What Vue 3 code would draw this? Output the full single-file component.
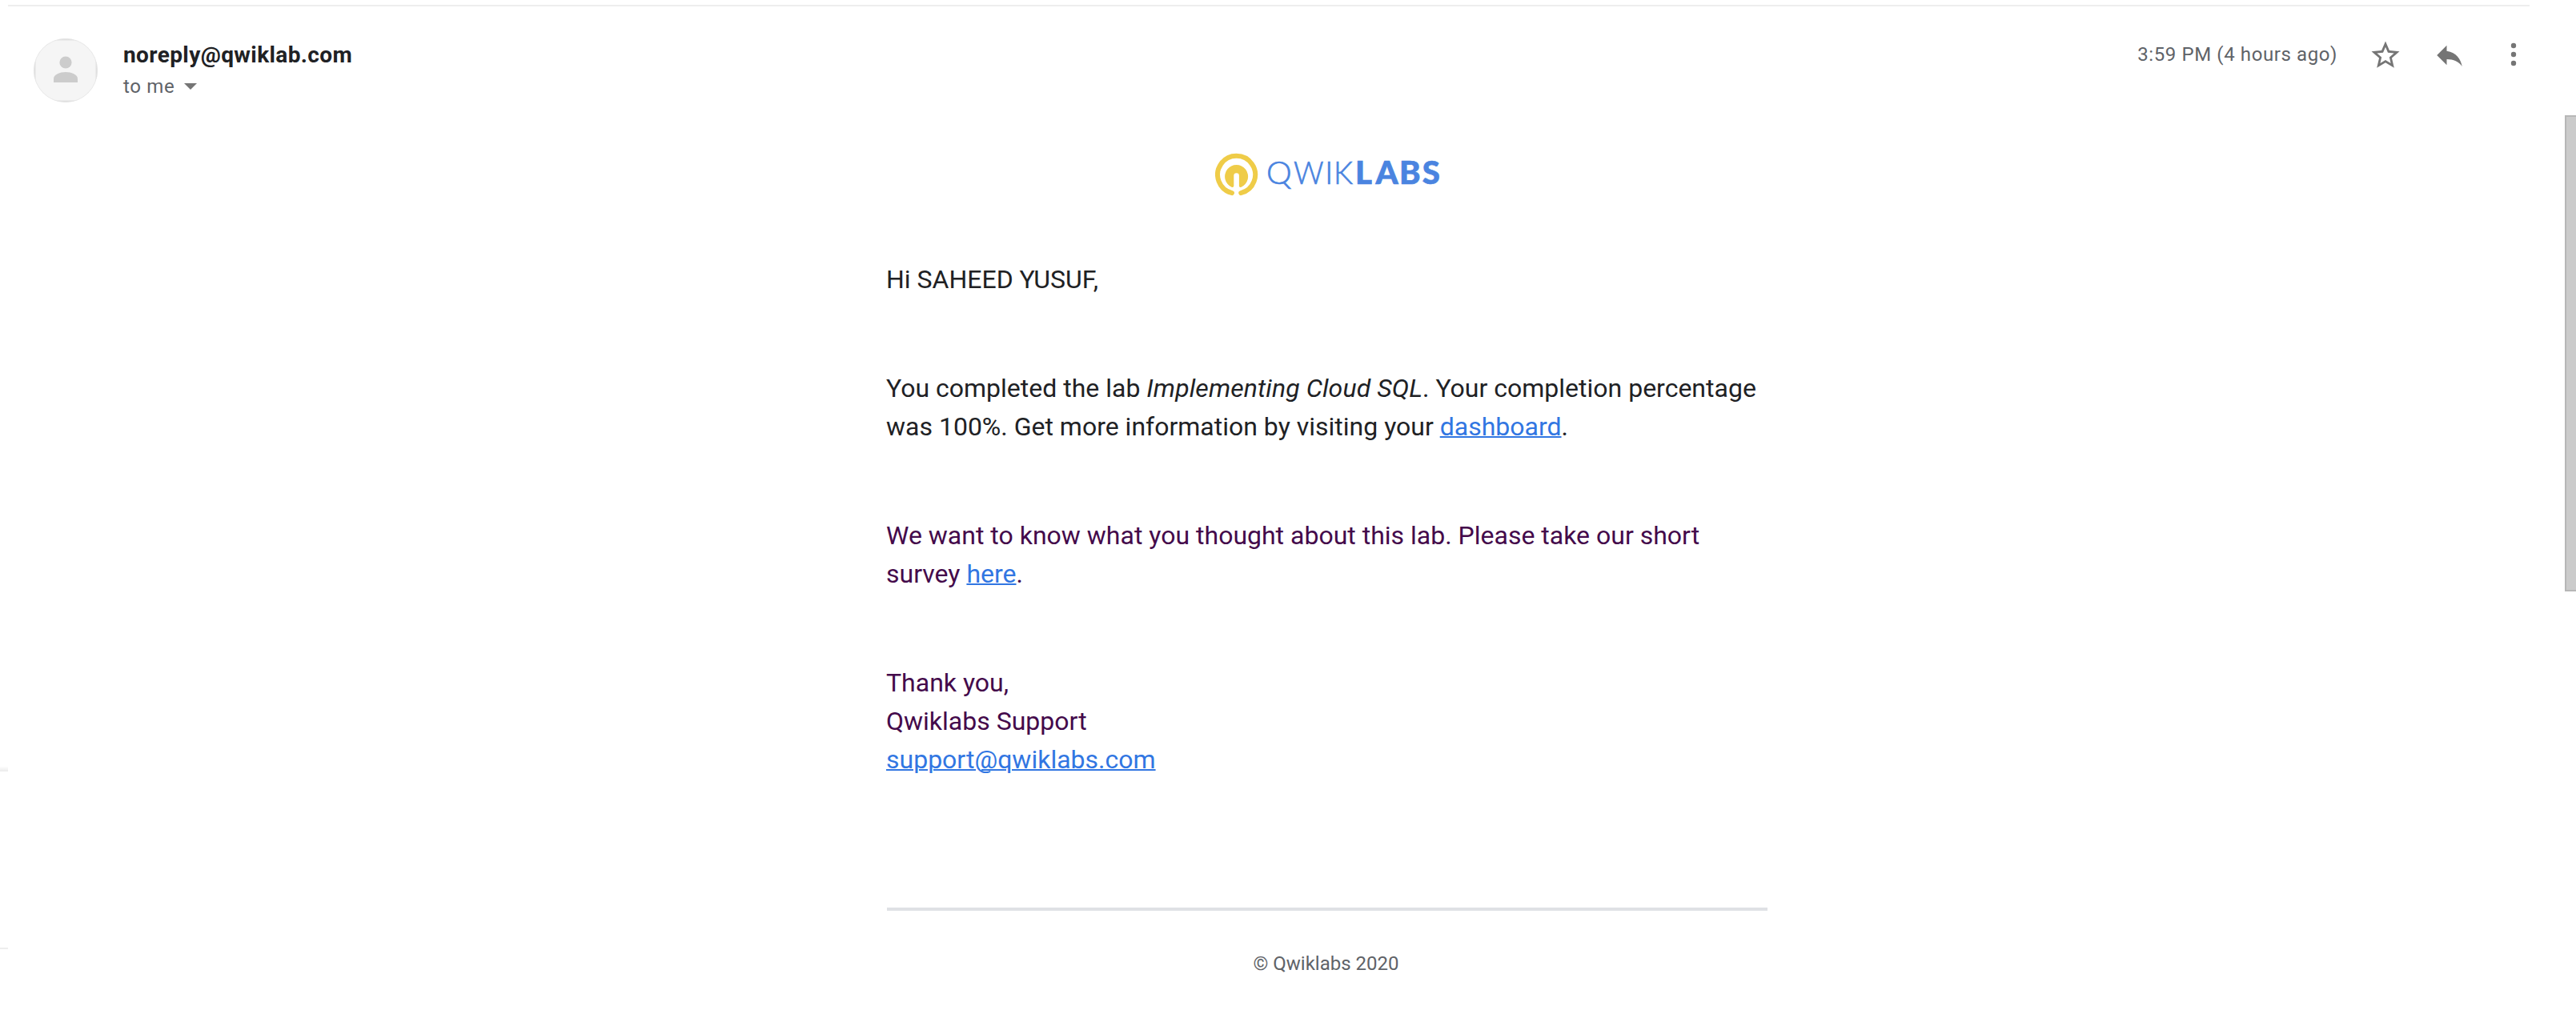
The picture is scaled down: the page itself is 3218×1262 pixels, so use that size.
<script setup>
const sender = 'noreply@qwiklab.com'
const sentAt = '3:59 PM (4 hours ago)'
</script>

<template>
  <div class="window">
    <aside class="gutter">
      <span class="divider shaded"></span>
      <span class="divider"></span>
    </aside>

    <main class="message">
      <header class="header">
        <svg class="avatar" viewBox="0 0 80 80">
          <defs>
            <clipPath id="avatar-clip"><circle cx="40" cy="40" r="40" /></clipPath>
          </defs>
          <g clip-path="url(#avatar-clip)">
            <rect width="80" height="80" fill="#e0e0e0" />
            <rect x="2.5" y="2.5" width="75" height="75" fill="#f5f5f5" />
            <circle cx="40" cy="40" r="39.6" fill="none" stroke="#e6e6e6" stroke-width=".8" />
          </g>
          <circle cx="40" cy="30" r="7.6" fill="#ccc" />
          <path d="M25 55v-4.500c0-5.500 8-8.500 15-8.500s15 3 15 8.500V55z" fill="#ccc" />
        </svg>

        <div class="people">
          <div class="sender">{{ sender }}</div>
          <div class="recipient">
            <span>to me</span>
            <svg class="caret" viewBox="0 0 16 8"><path d="M0 0h16L8 8z" fill="#757575" /></svg>
          </div>
        </div>

        <div class="actions">
          <time class="time">{{ sentAt }}</time>
          <svg class="icon star" viewBox="0 0 24 24">
            <path fill="#757575" d="M22 9.240l-7.190-.62L12 2 9.190 8.630 2 9.240l5.460 4.730L5.820 21 12 17.270 18.180 21l-1.630-7.030L22 9.240zM12 15.400l-3.760 2.270 1-4.280-3.320-2.880 4.380-.38L12 6.100l1.710 4.040 4.380.38-3.320 2.880 1 4.280L12 15.400z" />
          </svg>
          <svg class="icon reply" viewBox="0 0 24 24">
            <path fill="#757575" d="M10 9V5l-7 7 7 7v-4.100c5 0 8.500 1.600 11 5.100-1-5-4-10-11-11z" />
          </svg>
          <svg class="more" viewBox="0 0 8 30">
            <circle cx="4" cy="4" r="3.200" fill="#757575" />
            <circle cx="4" cy="15" r="3.200" fill="#757575" />
            <circle cx="4" cy="26" r="3.200" fill="#757575" />
          </svg>
        </div>
      </header>

      <article class="body">
        <svg class="logo" viewBox="0 0 284 60">
          <g fill="none" stroke="#efcc48" stroke-linecap="round">
            <path d="M21 51.100A23.500 23.500 0 1 1 32.200 51.100" stroke-width="6" />
          </g>
          <path fill="#efcc48" d="M23.300 42.300c0 1.700-1.500 2-2.800 1.400a14.500 14.500 0 1 1 12.200 0c-1.300.6-2.800.3-2.800-1.400V29.500a3.300 3.300 0 0 0-6.600 0z" />
          <g class="wordmark">
            <text class="light" y="40.300">
              <tspan x="64">Q</tspan><tspan x="98" textLength="37.500" lengthAdjust="spacingAndGlyphs">W</tspan><tspan x="137">I</tspan><tspan x="148" textLength="24" lengthAdjust="spacingAndGlyphs">K</tspan>
            </text>
            <text class="heavy" x="175 200.500 230 258.800" y="40.300">LABS</text>
          </g>
        </svg>

        <p>Hi SAHEED YUSUF,</p>
        <p>
          You completed the lab <em>Implementing Cloud SQL</em>. Your completion percentage<br />
          was 100%. Get more information by visiting your <a>dashboard</a>.
        </p>
        <p class="quoted">
          We want to know what you thought about this lab. Please take our short<br />
          survey <a>here</a>.
        </p>
        <p class="quoted">
          Thank you,<br />
          Qwiklabs Support<br />
          <a>support@qwiklabs.com</a>
        </p>

        <footer class="footer">© Qwiklabs 2020</footer>
      </article>
    </main>

    <div class="scroll-track"><div class="scroll-thumb"></div></div>
  </div>
</template>

<style>
body {
  margin: 0;
  background: #fff;
}
</style>

<style scoped>
.window {
  display: flex;
  width: 3218px;
  height: 1262px;
  overflow: hidden;
  background: #fff;
  color: #202124;
  font-family: Roboto, sans-serif;
}

.gutter {
  display: flex;
  flex-direction: column;
  gap: 220px;
  width: 10px;
  padding-top: 958px;
}

.divider {
  height: 2px;
  background: #eee;
}

.divider.shaded {
  height: 6px;
  background: linear-gradient(#fdfdfd, #f1f1f1 4px, #eee 4px);
}

.message {
  box-sizing: border-box;
  width: 3150px;
  margin-top: 6px;
  border-top: 2px solid #eee;
}

.header {
  display: flex;
  align-items: flex-start;
  height: 120px;
  padding: 40px 16px 0 32px;
  box-sizing: border-box;
}

.avatar {
  width: 80px;
  height: 80px;
}

.people {
  margin-left: 32px;
}

.sender {
  padding-top: 1px;
  font-size: 28px;
  font-weight: 700;
  line-height: 39px;
  letter-spacing: 0.4px;
}

.recipient {
  display: flex;
  align-items: center;
  gap: 12px;
  line-height: 40px;
  font-size: 24px;
  letter-spacing: 0.65px;
  color: #5f6368;
}

.caret {
  width: 16px;
  height: 8px;
}

.actions {
  display: flex;
  align-items: flex-start;
  margin-left: auto;
}

.time {
  margin-right: 39px;
  line-height: 40px;
  font-size: 24px;
  letter-spacing: 0.6px;
  color: #5f6368;
}

.icon {
  width: 42px;
  height: 42px;
}

.reply {
  margin-left: 38px;
}

.more {
  width: 8px;
  height: 30px;
  margin: 5px 0 0 55px;
}

.body {
  width: 1102px;
  margin-left: 1097px;
  padding-top: 62px;
  font-size: 32px;
  line-height: 48px;
}

.logo {
  display: block;
  width: 284px;
  height: 60px;
  margin: 0 auto 75px 411px;
}

.wordmark {
  font-family: Lato, sans-serif;
  font-size: 40px;
  fill: #4a84e0;
}

.light {
  font-weight: 300;
  stroke: #4a84e0;
  stroke-width: 0.7px;
}

.heavy {
  font-weight: 900;
  stroke: #4a84e0;
  stroke-width: 0.7px;
}

p {
  margin: 0 0 88px;
  white-space: nowrap;
}

.quoted {
  color: #440a4b;
}

em {
  letter-spacing: 0.1px;
}

a {
  color: #3176e2;
  text-decoration: underline;
  text-decoration-thickness: 2px;
}

.footer {
  margin: 161px 0 0 1px;
  width: 1100px;
  padding: 42px 3px 0 0;
  border-top: 4px solid #dfe1e5;
  box-sizing: border-box;
  text-align: center;
  color: #5f6368;
  font-size: 24px;
}

.scroll-track {
  width: 14px;
  margin-left: auto;
  padding-top: 144px;
}

.scroll-thumb {
  box-sizing: border-box;
  height: 595px;
  border: 2px solid #b7b7b7;
  border-right: 0;
  background: #cbcbcb;
}
</style>
